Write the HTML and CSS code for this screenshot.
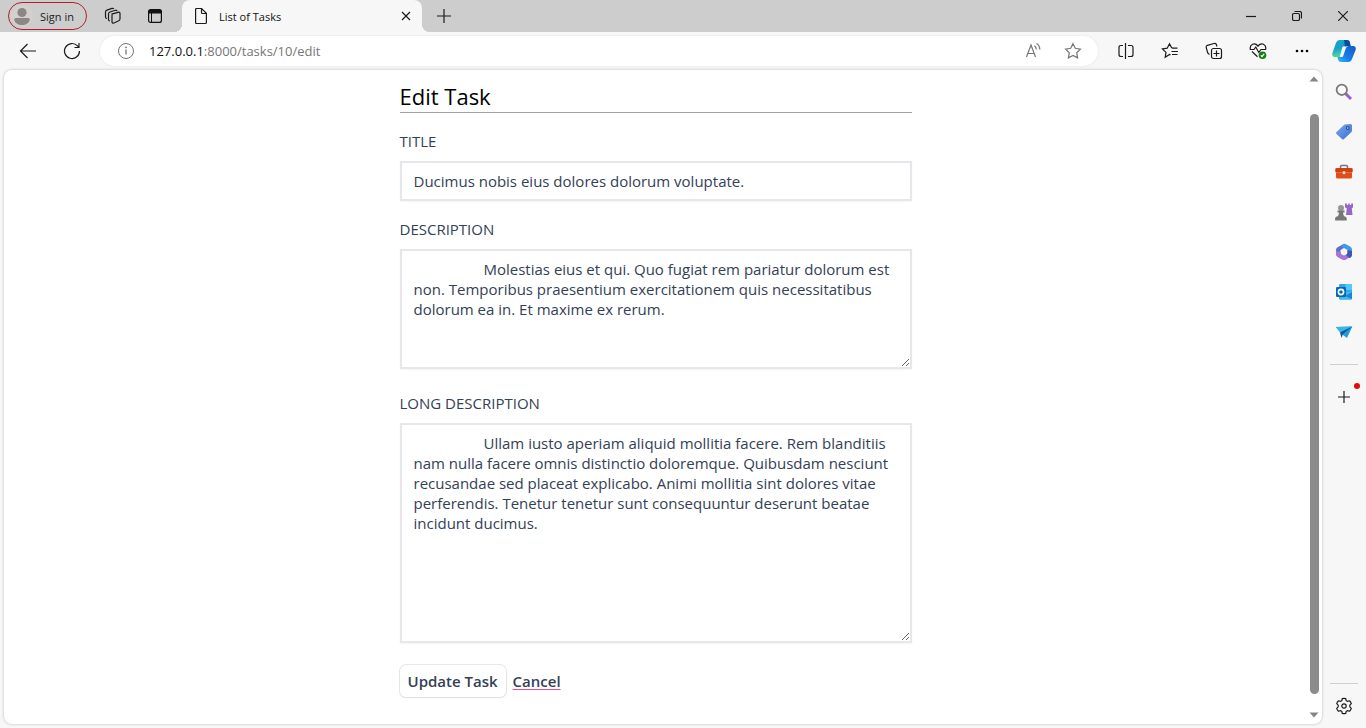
FILE: index.html
```html
<!DOCTYPE html>
<html lang="en">
<head>
<meta charset="utf-8">
<meta name="viewport" content="width=device-width, initial-scale=1">
<title>List of Tasks</title>
<link rel="stylesheet" href="styles.css">
</head>
<body class="browser">
<header class="tabbar">
  <div class="tabbar-left">
    <button class="profile" type="button">
      <svg class="avatar" width="22" height="22" viewBox="0 0 22 22"><circle cx="11" cy="11" r="11" fill="#d3d0cd"/><circle cx="11" cy="7.500" r="4.600" fill="#8a8784"/><path d="M3.200 14.500q0-1.500 1.500-1.500h12.600q1.500 0 1.500 1.500c-.3 3.500-4 5.500-7.800 5.500s-7.500-2-7.800-5.500z" fill="#8a8784"/></svg>
      <span>Sign in</span>
    </button>
    <button class="icon-btn workspaces" type="button" aria-label="Workspaces">
      <svg class="line" width="18" height="18" viewBox="0 0 18 18"><path d="M7.500 7.200 14 5.300q2-.5 2 1.300v5.200q0 1.500-1.300 2L10 16q-2 .5-2-1.300V8.500q0-1 .8-1.400"/><path d="M5.800 13.800q-1.300 0-1.300-1.400V7q0-1.500 1.400-2l5.400-1.700q1.500-.3 1.700.8M3 11.500q-1.500-.1-1.500-1.500V5q0-1.400 1.400-1.900L8 1.400q1.400-.3 1.700.6"/></svg>
    </button>
    <button class="icon-btn tabmenu" type="button" aria-label="Tab actions">
      <svg width="16" height="16" viewBox="0 0 16 16"><rect x="1.600" y="1.600" width="12.800" height="12.800" rx="2" fill="none" stroke="#111" stroke-width="1.200"/><path d="M1.500 5.500V3.500q0-2 2-2h9q2 0 2 2v2z" fill="#111"/><path d="M4.500 5v9.500" stroke="#111"/></svg>
    </button>
  </div>
  <div class="tab">
    <svg class="line" width="14" height="18" viewBox="0 0 14 18"><path d="M1.600 2.500q0-1 1-1h5l4.800 4.800V15.500q0 1-1 1H2.600q-1 0-1-1zM7.500 1.500V5.500q0 1 1 1h3.900"/></svg>
    <span class="tab-title">List of Tasks</span>
    <button class="icon-btn" type="button" aria-label="Close tab"><svg class="line" width="10" height="10" viewBox="0 0 10 10"><path d="m1 1 8 8M9 1 1 9"/></svg></button>
  </div>
  <button class="icon-btn new-tab" type="button" aria-label="New tab"><svg class="line" width="14" height="14" viewBox="0 0 14 14"><path d="M7 0v14M0 7h14"/></svg></button>
  <div class="window-controls">
    <button class="icon-btn" type="button" aria-label="Minimize"><svg class="line" width="10" height="10" viewBox="0 0 10 10"><path d="M0 5.500h10"/></svg></button>
    <button class="icon-btn" type="button" aria-label="Restore"><svg class="line" width="10" height="10" viewBox="0 0 10 10"><rect x=".5" y="2.500" width="7" height="7" rx="1.500"/><path d="M2.500.5H7.500q2 0 2 2v5"/></svg></button>
    <button class="icon-btn" type="button" aria-label="Close window"><svg class="line" width="10" height="10" viewBox="0 0 10 10"><path d="m0 0 10 10M10 0 0 10"/></svg></button>
  </div>
</header>

<div class="toolbar">
  <div class="nav">
    <button class="icon-btn" type="button" aria-label="Back"><svg class="line" width="18" height="16" viewBox="0 0 18 16"><path d="M17 8H1.500M8.500 1l-7 7 7 7"/></svg></button>
    <button class="icon-btn" type="button" aria-label="Refresh"><svg class="line" width="18" height="18" viewBox="0 0 18 18"><path d="M16.500 9a7.500 7.500 0 1 1-2-5.100L16 5.500M16 1v4.500h-4.500"/></svg></button>
  </div>
  <div class="address">
    <svg class="info" width="18" height="18" viewBox="0 0 18 18"><circle cx="9" cy="9" r="7.500" fill="none" stroke="#747474"/><path d="M9 7.500v5" stroke="#747474" stroke-width="1.300"/><circle cx="9" cy="5.300" r=".9" fill="#747474"/></svg>
    <span class="url"><b>127.0.0.1</b>:8000/tasks/10/edit</span>
    <button class="icon-btn" type="button" aria-label="Read aloud"><svg class="line muted" width="18" height="18" viewBox="0 0 18 18"><path d="M2.500 15 7 3l4.500 12M4 11.500h6M10.500 3.700q1.800 1.400 1.800 3.800M12.500 1.500q3.300 2 3.300 6"/></svg></button>
    <button class="icon-btn" type="button" aria-label="Add to favorites"><svg class="line muted" width="18" height="18" viewBox="0 0 18 18"><path d="m9 1.700 2.300 4.600 5.100.8-3.700 3.600.9 5.200L9 13.500l-4.600 2.400.9-5.200L1.600 7.100l5.100-.8z"/></svg></button>
  </div>
  <div class="actions">
    <button class="icon-btn" type="button" aria-label="Split screen"><svg class="line" width="18" height="18" viewBox="0 0 18 18"><path d="M8.500 1v16M6 3.500H4q-2 0-2 2v7q0 2 2 2h2M11 3.500h3q2 0 2 2v7q0 2-2 2h-3"/></svg></button>
    <button class="icon-btn" type="button" aria-label="Favorites"><svg class="line" width="18" height="18" viewBox="0 0 18 18"><path d="M9.500 12.900 8.500 12.500l-4.300 2.700.8-4.800L1.400 7l4.800-.8L8.500 1.700l2 3.900 1.200.6H16.500M10.500 9.500H17M11 12.500h5.500"/></svg></button>
    <button class="icon-btn" type="button" aria-label="Collections"><svg class="line" width="18" height="18" viewBox="0 0 18 18"><rect x="6.500" y="6.500" width="10" height="10" rx="2"/><path d="M11.500 8.500v6M8.500 11.500h6M4.500 12.300q-1.300-.2-1.800-1.500L1.200 5.500q-.3-1.600 1.200-2.200L9 1.500q1.700-.4 2.400 1l.6 2"/></svg></button>
    <button class="icon-btn" type="button" aria-label="Browser essentials"><svg class="line" width="18" height="18" viewBox="0 0 18 18"><path d="M1.300 7.500C.4 2.300 5.600-.1 9 4c3.400-4.100 8.600-1.700 7.700 3.500M3 9.500l5.500 5.300M.8 7.500H5L6.800 5l3 5.500L12 7.500h5"/><circle cx="13.500" cy="13.300" r="3.800" fill="#167d19" stroke="none"/><path d="m11.800 13.300 1.200 1.200 2.200-2.600" stroke="#fff"/></svg></button>
    <button class="icon-btn" type="button" aria-label="Settings and more"><svg width="16" height="4" viewBox="0 0 16 4"><circle cx="3" cy="2" r="1.300"/><circle cx="8" cy="2" r="1.300"/><circle cx="13" cy="2" r="1.300"/></svg></button>
  </div>
  <button class="icon-btn copilot" type="button" aria-label="Copilot">
    <svg width="24" height="24" viewBox="0 0 24 24"><defs><linearGradient id="ca" x1="0" y1="0" x2=".2" y2="1"><stop stop-color="#16a5c7"/><stop offset=".5" stop-color="#159fd0"/><stop offset="1" stop-color="#55d797"/></linearGradient><linearGradient id="cb" x1="1" y1="0" x2="0" y2="1"><stop stop-color="#1457c4"/><stop offset=".6" stop-color="#187fe8"/><stop offset="1" stop-color="#36bff3"/></linearGradient></defs><path d="M8 1h7q2.500 0 3 3l.6 3h-3q-2 0-2.700 2l-2.500 7q-.7 2-2.500 2H3Q-.5 18 .4 14L4 4q1-3 4-3z" fill="url(#ca)"/><path d="M12 1h3q2.500 0 3 3l.6 3h-3q-1.600 0-2.500 1.600z" fill="#0b4d9d"/><path d="M16 23H9q-2.500 0-3-3l-.6-2h2.500q2 0 2.700-2l2.600-7Q14 7 16 7h5q3.500 0 2.600 4L20 20q-1 3-4 3z" fill="url(#cb)"/><path d="M11 7.500h5q-1.800.3-2.500 2.500L11.200 17q-.4 1-1.200 1H8.500q-.8 0-.5-1l2.300-8.500q.2-1 .7-1z" fill="#f7f7f7"/></svg>
  </button>
</div>

<div class="workspace">
  <main class="page">
    <div class="page-body">
      <form class="task-form">
        <h1 class="heading">Edit Task</h1>
        <div class="field">
          <label for="title">TITLE</label>
          <input id="title" type="text" value="Ducimus nobis eius dolores dolorum voluptate.">
        </div>
        <div class="field field-area">
          <label for="description">DESCRIPTION</label>
          <textarea id="description" rows="5">Molestias eius et qui. Quo fugiat rem pariatur dolorum est non. Temporibus praesentium exercitationem quis necessitatibus dolorum ea in. Et maxime ex rerum.</textarea>
        </div>
        <div class="field field-area">
          <label for="long">LONG DESCRIPTION</label>
          <textarea id="long" rows="10">Ullam iusto aperiam aliquid mollitia facere. Rem blanditiis nam nulla facere omnis distinctio doloremque. Quibusdam nesciunt recusandae sed placeat explicabo. Animi mollitia sint dolores vitae perferendis. Tenetur tenetur sunt consequuntur deserunt beatae incidunt ducimus.</textarea>
        </div>
        <div class="buttons">
          <button class="btn" type="button">Update Task</button>
          <a class="link" href="#">Cancel</a>
        </div>
      </form>
    </div>
    <div class="scrollbar" aria-hidden="true">
      <svg width="10" height="6" viewBox="0 0 10 6"><path d="M.5 5.500 5 .5l4.500 5z" fill="#858585"/></svg>
      <div class="track"><div class="thumb"></div></div>
      <svg width="10" height="6" viewBox="0 0 10 6"><path d="M.5.5 5 5.500 9.500.5z" fill="#858585"/></svg>
    </div>
  </main>
  <aside class="sidebar">
    <button class="icon-btn" type="button" aria-label="Search"><svg width="18" height="18" viewBox="0 0 18 18"><path d="m11 11 5 5" stroke="#9b5fd0" stroke-width="3"/><path d="m10 10 2 2" stroke="#777" stroke-width="2"/><circle cx="6.800" cy="6.800" r="5.200" fill="#fafafa" stroke="#7b7977" stroke-width="1.800"/></svg></button>
    <button class="icon-btn" type="button" aria-label="Shopping"><svg width="18" height="18" viewBox="0 0 18 18"><defs><linearGradient id="tg" x2="1" y2="1"><stop stop-color="#76a8f2"/><stop offset="1" stop-color="#3f6fd0"/></linearGradient></defs><path d="M9.500 1.500 15.500 1q1.500 0 1.500 1.500v5q0 1-.8 1.800L9 16q-1 1-2 0L1.500 11q-1.200-1 0-2z" fill="url(#tg)"/><circle cx="12.800" cy="5" r="1.300" fill="#fff" stroke="#294a94" stroke-width="1.200"/></svg></button>
    <button class="icon-btn" type="button" aria-label="Tools"><svg width="18" height="18" viewBox="0 0 18 18"><path d="M5.500 5V3.500q0-1 1-1h5q1 0 1 1V5" fill="none" stroke="#777" stroke-width="1.500"/><rect x="1" y="8" width="16" height="7.500" rx="1.500" fill="#e04e1b"/><rect x=".3" y="5" width="17.400" height="4.500" rx="1.300" fill="#cf4113"/><path d="M1 9.500h16" stroke="#ef6c36"/><circle cx="9" cy="9.700" r="1.600" fill="#ddd"/></svg></button>
    <button class="icon-btn" type="button" aria-label="Games"><svg width="18" height="18" viewBox="0 0 18 18"><path d="M10 .5h1.800V2h1.400V.5h1.600V2h1.400V.5H18V4q0 1-1.200 1.300L17.500 12H11l.8-6.700Q10 5 10 4z" fill="#9666cf"/><circle cx="6" cy="5" r="3" fill="#969696"/><path d="M2.500 7.500h7v2H8q0 2.500 1.500 4h.5q2.200.3 1.700 4H.2q-.7-3.700 1.600-4h.7Q4 12 4 9.500H2.500z" fill="#777"/></svg></button>
    <button class="icon-btn" type="button" aria-label="Microsoft 365"><svg width="18" height="18" viewBox="0 0 18 18"><path d="M9 .8 2.500 4.300Q1 5.200 1 7v5l4.500 1.500V7l5-3z" fill="#5672ce"/><path d="M1 8v3q0 2 1.500 3L7 16.500q2 1.100 4 0l4-2.200-4.500-2.300q-1.500.8-3 0-2-1-2-3z" fill="#a774d3"/><path d="M9 .8q1 0 2 .5l4.500 2.500Q17 4.700 17 6.500v5q0 2-1.500 3l-1 .5-2-2V7L6.500 3.500z" fill="#3e9bea"/><path d="m12.500 7 4.500 1v3.500q0 2-1.500 3l-1 .5-4-3q2-1 2-2.500z" fill="#4054b5"/></svg></button>
    <button class="icon-btn" type="button" aria-label="Outlook"><svg width="18" height="18" viewBox="0 0 18 18"><rect x="4" y="1" width="13" height="15.500" rx="1.300" fill="#2da8e8"/><path d="M10.500 1H16q1 0 1 1v5h-6.500z" fill="#55c9f5"/><path d="m5 10 12-2v7.500q0 1-1 1H5z" fill="#40b9ed"/><path d="m10 13 7-4v7z" fill="#1687d0"/><rect x="1" y="4" width="10" height="10" rx="1.300" fill="#0866b6"/><circle cx="6" cy="9" r="2.600" fill="none" stroke="#fff" stroke-width="1.600"/></svg></button>
    <button class="icon-btn" type="button" aria-label="Drop"><svg width="18" height="18" viewBox="0 0 18 18"><path d="m.8 4 16.500-.5L12 15l-4-3z" fill="#269bdc"/><path d="M.8 4 5 9.500l12.300-6z" fill="#39b5ed"/><path d="m5 9.500 12.300-6L8 11l-1.500 4z" fill="#0c5597"/></svg></button>
    <hr>
    <button class="icon-btn add" type="button" aria-label="Customize"><svg class="line" width="12" height="12" viewBox="0 0 12 12"><path d="M6 0v12M0 6h12"/></svg><span class="dot"></span></button>
    <div class="sidebar-foot">
      <hr>
      <button class="icon-btn" type="button" aria-label="Settings"><svg class="line" width="18" height="18" viewBox="0 0 18 18"><path d="M7.300 1.600q1.700-.5 3.400 0l.5 2.100 1.300.7 2-.6q1.300 1.200 1.800 2.900L14.800 8.200v1.600l1.500 1.500q-.5 1.700-1.800 2.900l-2-.6-1.300.7-.5 2.100q-1.700.5-3.400 0l-.5-2.100-1.300-.7-2 .6q-1.300-1.200-1.800-2.900l1.500-1.500V8.200L1.700 6.700q.5-1.700 1.800-2.900l2 .6 1.300-.7z"/><circle cx="9" cy="9" r="2.200"/></svg></button>
    </div>
  </aside>
</div>
</body>
</html>
```

FILE: styles.css
```css
* { box-sizing: border-box; }

.browser {
  margin: 0;
  min-height: 100vh;
  display: flex;
  flex-direction: column;
  background: #f7f7f7;
  color: #111;
  font-family: "Open Sans", "Noto Sans", sans-serif;
  font-size: 12px;
}

svg { display: block; flex: none; }
.line { fill: none; stroke: #1b1b1b; stroke-width: 1.2; }
.muted { stroke: #767676; }

.icon-btn {
  display: flex;
  align-items: center;
  justify-content: center;
  padding: 0;
  border: 0;
  background: none;
}

/* Tab strip */
.tabbar {
  display: flex;
  height: 32px;
  background: #cdcdcd;
}
.tabbar-left {
  display: flex;
  align-items: center;
  width: 182px;
  padding-left: 8px;
}
.profile {
  display: flex;
  align-items: center;
  gap: 7px;
  width: 79px;
  height: 28px;
  padding: 0 0 0 2px;
  border: 1px solid #b3202a;
  border-radius: 14px;
  background: none;
  color: #222;
  font: inherit;
  font-size: 11px;
  white-space: nowrap;
}
.workspaces { margin-left: 17px; }
.tabmenu { margin-left: 25px; }
.tab {
  position: relative;
  display: flex;
  align-items: center;
  width: 240px;
  padding: 0 11px 0 12px;
  border-radius: 8px 8px 0 0;
  background: #f7f7f7;
}
.tab::before,
.tab::after {
  content: "";
  position: absolute;
  bottom: 0;
  width: 8px;
  height: 8px;
}
.tab::before {
  right: 100%;
  background: radial-gradient(circle at 0 0, transparent 8px, #f7f7f7 8px);
}
.tab::after {
  left: 100%;
  background: radial-gradient(circle at 100% 0, transparent 8px, #f7f7f7 8px);
}
.tab-title {
  flex: 1;
  padding-left: 11px;
  font-size: 11px;
}
.new-tab { padding: 0 15px; }
.window-controls {
  display: flex;
  margin-left: auto;
}
.window-controls .icon-btn { width: 46px; }

/* Toolbar */
.toolbar {
  display: flex;
  align-items: center;
  height: 38px;
}
.nav { display: flex; padding-left: 6px; }
.nav .icon-btn { width: 44px; }
.address {
  flex: 1;
  display: flex;
  align-items: center;
  height: 30px;
  margin-left: 6px;
  padding: 0 16px 0 17px;
  border-radius: 15px;
  background: #fff;
  box-shadow: 0 0 3px rgba(0, 0, 0, .08);
}
.url {
  flex: 1;
  padding-left: 14px;
  color: #767676;
  font-size: 13px;
}
.url b { color: #111; font-weight: 400; }
.address .icon-btn + .icon-btn { margin-left: 22px; }
.actions { display: flex; padding-left: 6px; }
.actions .icon-btn { width: 44px; }
.copilot { width: 40px; margin-right: 2px; }

/* Page and sidebar */
.workspace {
  flex: 1;
  display: flex;
}
.page {
  flex: 1;
  display: flex;
  margin: 0 0 4px 4px;
  border-radius: 8px;
  background: #fff;
  box-shadow: 0 0 3px rgba(0, 0, 0, .25);
}
.page-body { flex: 1; padding: 10px 0 24px; }
.scrollbar {
  display: flex;
  flex-direction: column;
  align-items: center;
  gap: 4px;
  width: 16px;
  margin-left: -1px;
  padding: 6px 0;
}
.track {
  flex: 1;
  width: 9px;
  padding-top: 28px;
  padding-bottom: 14px;
  display: flex;
}
.thumb {
  flex: 1;
  border-radius: 5px;
  background: #8b8b8b;
}
.sidebar {
  display: flex;
  flex-direction: column;
  align-items: center;
  width: 44px;
  padding-top: 2px;
}
.sidebar .icon-btn { width: 36px; height: 40px; }
.sidebar hr {
  width: 28px;
  margin: 12px 0;
  border: 0;
  border-top: 1px solid #cfcfcf;
}
.sidebar .add { position: relative; }
.dot {
  position: absolute;
  top: 6px;
  right: 2px;
  width: 6px;
  height: 6px;
  border-radius: 50%;
  background: #e00b0b;
}
.sidebar-foot { margin-top: auto; padding-bottom: 2px; }
.sidebar-foot hr { margin: 0 4px 2px; }

/* Task form */
.task-form {
  max-width: 512px;
  margin: 0 auto;
  color: #334155;
  font-size: 15px;
}
.heading {
  margin: 0 0 16px;
  border-bottom: 1px solid #9ca3af;
  color: #000;
  font-size: 22px;
  font-weight: 400;
  line-height: 32px;
}
.field { margin-bottom: 16px; }
.field-area { margin-bottom: 22px; }
.field label {
  display: block;
  margin-bottom: 8px;
  line-height: 24px;
}
.field input,
.field textarea {
  display: block;
  width: 100%;
  margin: 0;
  padding: 8px 12px;
  border: 2px solid #e5e7eb;
  background: #fff;
  box-shadow: 0 1px 2px rgba(0, 0, 0, .05);
  color: #334155;
  font: inherit;
  line-height: 20px;
}
.field input { height: 40px; }
.field textarea { text-indent: 70px; }
.buttons {
  display: flex;
  align-items: center;
  gap: 7px;
  font-weight: 600;
}
.btn {
  padding: 4px 8px;
  border: 0;
  border-radius: 6px;
  background: #fff;
  box-shadow: 0 0 0 1px rgba(51, 65, 85, .12), 0 1px 2px rgba(0, 0, 0, .05);
  color: #334155;
  font: inherit;
  line-height: 24px;
}
.link {
  color: #334155;
  text-decoration-line: underline;
  text-decoration-color: #ec4899;
  text-decoration-thickness: 1px;
  text-underline-offset: 2px;
}
```
